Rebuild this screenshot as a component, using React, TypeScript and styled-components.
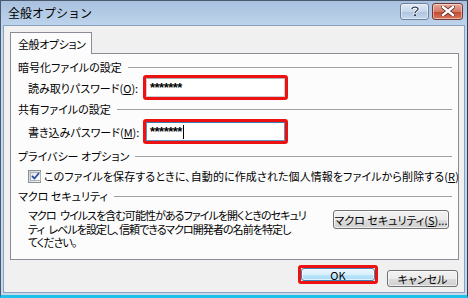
import React from "react";
import styled, { createGlobalStyle } from "styled-components";

const Global = createGlobalStyle`
  html, body { margin: 0; padding: 0; background: #fff; }
  body { font-family: "Noto Sans CJK JP", "Noto Sans", sans-serif; font-size: 11px; color: #000; }
  * { box-sizing: border-box; }
`;

const Window = styled.div`
  width: 468px;
  height: 298px;
  display: flex;
  flex-direction: column;
  background: linear-gradient(#a9c1de, #c2d8ef 30px, #c4d9ee);
  border: 1px solid #4a5a6e;
  border-right-color: #2c3e50;
  border-bottom: 3px solid #1ec1e8;
  padding: 0 2px 2px 2px;
  overflow: hidden;
  font-feature-settings: "palt";
  white-space: nowrap;
`;

const TitleBar = styled.div`
  height: 24px;
  display: flex;
  align-items: center;
  padding-left: 5px;
  padding-right: 2px;
  flex: none;
`;

const Title = styled.div`
  flex: 1;
  font-size: 12px;
  font-feature-settings: normal;
  color: #000;
  margin-top: -2px;
`;

const CaptionButton = styled.div<{ $kind: "help" | "close" }>`
  width: ${(p) => (p.$kind === "help" ? 29 : 31)}px;
  height: 17px;
  margin-left: ${(p) => (p.$kind === "help" ? 0 : 3)}px;
  margin-top: -4px;
  border: 1px solid ${(p) => (p.$kind === "help" ? "#6d819c" : "#6d3a36")};
  border-radius: 3px;
  background: ${(p) =>
    p.$kind === "help"
      ? "linear-gradient(#dfe9f5, #c6d6ea 50%, #aec3dd 51%, #c5d8ee)"
      : "linear-gradient(#e9a99c, #d47a68 50%, #c2452d 51%, #d77a5e)"};
  box-shadow: inset 0 0 0 1px rgba(255,255,255,0.45);
  display: flex;
  align-items: center;
  justify-content: center;
`;

const Client = styled.div`
  flex: 1;
  background: #f0f0f0;
  display: flex;
  flex-direction: column;
  padding: 6px 6px 0 6px;
  border: 1px solid #8aa0bc;
`;

const TabStrip = styled.div`
  display: flex;
  height: 21px;
  position: relative;
  z-index: 1;
`;

const Tab = styled.div`
  height: 22px;
  width: 82px;
  padding-left: 7px;
  border: 1px solid #898c95;
  border-bottom: none;
  background: #fcfcfc;
  display: flex;
  align-items: center;
  letter-spacing: -0.4px;
`;

const Panel = styled.div`
  width: 449px;
  height: 207px;
  border: 1px solid #898c95;
  background: #fcfcfc;
  padding: 5px 6px 0 7px;
  display: flex;
  flex-direction: column;
`;

const GroupHeader = styled.div<{ $mt: number }>`
  display: flex;
  align-items: center;
  height: 14px;
  margin-top: ${(p) => p.$mt}px;
  &::after {
    content: "";
    flex: 1;
    height: 1px;
    background: #a0a0a0;
    margin-left: 6px;
  }
`;

const FieldRow = styled.div<{ $mt: number }>`
  display: flex;
  align-items: center;
  height: 25px;
  margin-top: ${(p) => p.$mt}px;
  padding-left: 10px;
`;

const Label = styled.div`
  width: 115px;
`;

const Highlight = styled.div`
  width: 145px;
  height: 25px;
  border: 3px solid #ee1111;
  border-radius: 3px;
  display: flex;
  background: #fff;
`;

const Input = styled.div<{ $focused?: boolean }>`
  flex: 1;
  border: 1px solid ${(p) => (p.$focused ? "#5f94c7" : "#c8ccd3")};
  border-top-color: ${(p) => (p.$focused ? "#3d7bad" : "#abadb3")};
  background: #fff;
  display: flex;
  align-items: center;
  padding-left: 3px;
  font-family: "Liberation Sans", sans-serif;
  font-size: 13px;
  font-weight: bold;
  letter-spacing: -0.5px;
`;

const Caret = styled.span`
  display: inline-block;
  width: 1px;
  height: 14px;
  background: #000;
  margin-left: 1px;
`;

const CheckRow = styled.div`
  display: flex;
  align-items: center;
  height: 14px;
  margin-top: 6px;
  padding-left: 10px;
  gap: 3px;
  letter-spacing: 0.1px;
`;

const Checkbox = styled.div`
  width: 13px;
  height: 13px;
  border: 1px solid #8e8f8f;
  background: linear-gradient(135deg, #cbcfd5, #f6f6f6);
  padding: 1px;
  display: flex;
  flex: none;
`;

const CheckInner = styled.div`
  flex: 1;
  background: linear-gradient(135deg, #dfe4ea, #ffffff);
  border: 1px solid #a9b1ba;
  display: flex;
  align-items: center;
  justify-content: center;
`;

const MacroRow = styled.div`
  display: flex;
  margin-top: 6px;
  padding-left: 10px;
  gap: 20px;
`;

const MacroText = styled.div`
  width: 285px;
  line-height: 13.5px;
  letter-spacing: -0.95px;
  word-spacing: 3px;
`;

const PushButton = styled.div<{ $w: number; $h: number; $default?: boolean }>`
  width: ${(p) => p.$w}px;
  height: ${(p) => p.$h}px;
  border: 1px solid ${(p) => (p.$default ? "#3c7fb1" : "#707070")};
  border-radius: 3px;
  background: ${(p) =>
    p.$default
      ? "linear-gradient(#eaf6fd, #d9f0fc 50%, #bee6fd 51%, #a7d9f5)"
      : "linear-gradient(#f2f2f2, #ebebeb 50%, #dddddd 51%, #cfcfcf)"};
  box-shadow: inset 0 0 0 1px rgba(255,255,255,0.65);
  display: flex;
  align-items: center;
  justify-content: center;
  flex: none;
`;

const MacroButtonWrap = styled.div`
  margin-top: 1px;
`;

const Footer = styled.div`
  flex: 1;
  display: flex;
  justify-content: flex-end;
  align-items: flex-start;
  padding-top: 5px;
  gap: 9px;
`;

const DefaultHighlight = styled.div`
  width: 80px;
  height: 19px;
  border: 3px solid #ee1111;
  border-radius: 3px;
  display: flex;
`;

const CancelWrap = styled.div`
  margin-top: 5px;
`;

const U = styled.span`
  text-decoration: underline;
`;

export default function App() {
  return (
    <>
      <Global />
      <Window>
        <TitleBar>
          <Title>全般オプション</Title>
          <CaptionButton $kind="help">
            <svg width="10" height="12" viewBox="0 0 10 12">
              <path d="M2 4 C2 1.5 8 1.5 8 4 C8 6 5 6 5 8" fill="none" stroke="#fff" strokeWidth="3" />
              <path d="M2 4 C2 1.5 8 1.5 8 4 C8 6 5 6 5 8" fill="none" stroke="#2d3f5a" strokeWidth="1.4" />
              <rect x="3.6" y="9" width="2.8" height="2.6" fill="#2d3f5a" stroke="#fff" strokeWidth="0.6" />
            </svg>
          </CaptionButton>
          <CaptionButton $kind="close">
            <svg width="14" height="10" viewBox="0 0 14 10">
              <path d="M2 1 L12 9 M12 1 L2 9" stroke="#5a2a24" strokeWidth="4" strokeLinecap="square" />
              <path d="M2 1 L12 9 M12 1 L2 9" stroke="#fff" strokeWidth="2.4" strokeLinecap="square" />
            </svg>
          </CaptionButton>
        </TitleBar>
        <Client>
          <TabStrip>
            <Tab>全般オプション</Tab>
          </TabStrip>
          <Panel>
            <GroupHeader $mt={1}>暗号化ファイルの設定</GroupHeader>
            <FieldRow $mt={1}>
              <Label>
                読み取りパスワード(<U>O</U>):
              </Label>
              <Highlight>
                <Input>*******</Input>
              </Highlight>
            </FieldRow>
            <GroupHeader $mt={2}>共有ファイルの設定</GroupHeader>
            <FieldRow $mt={3}>
              <Label>
                書き込みパスワード(<U>M</U>):
              </Label>
              <Highlight>
                <Input $focused>
                  *******<Caret />
                </Input>
              </Highlight>
            </FieldRow>
            <GroupHeader $mt={5}>プライバシー オプション</GroupHeader>
            <CheckRow>
              <Checkbox>
                <CheckInner>
                  <svg width="9" height="8" viewBox="0 0 9 8">
                    <path d="M1 4 L3.5 6.5 L8 1" fill="none" stroke="#2b4f9c" strokeWidth="1.8" />
                  </svg>
                </CheckInner>
              </Checkbox>
              <span>
                このファイルを保存するときに、自動的に作成された個人情報をファイルから削除する(<U>R</U>)
              </span>
            </CheckRow>
            <GroupHeader $mt={6}>マクロ セキュリティ</GroupHeader>
            <MacroRow>
              <MacroText>
                マクロ ウイルスを含む可能性があるファイルを開くときのセキュリ
                <br />
                ティ レベルを設定し、信頼できるマクロ開発者の名前を特定し
                <br />
                てください。
              </MacroText>
              <MacroButtonWrap>
                <PushButton $w={116} $h={19}>
                  マクロ セキュリティ(<U>S</U>)...
                </PushButton>
              </MacroButtonWrap>
            </MacroRow>
          </Panel>
          <Footer>
            <DefaultHighlight>
              <PushButton $w={74} $h={13} $default>
                OK
              </PushButton>
            </DefaultHighlight>
            <CancelWrap>
              <PushButton $w={71} $h={17}>
                キャンセル
              </PushButton>
            </CancelWrap>
          </Footer>
        </Client>
      </Window>
    </>
  );
}
